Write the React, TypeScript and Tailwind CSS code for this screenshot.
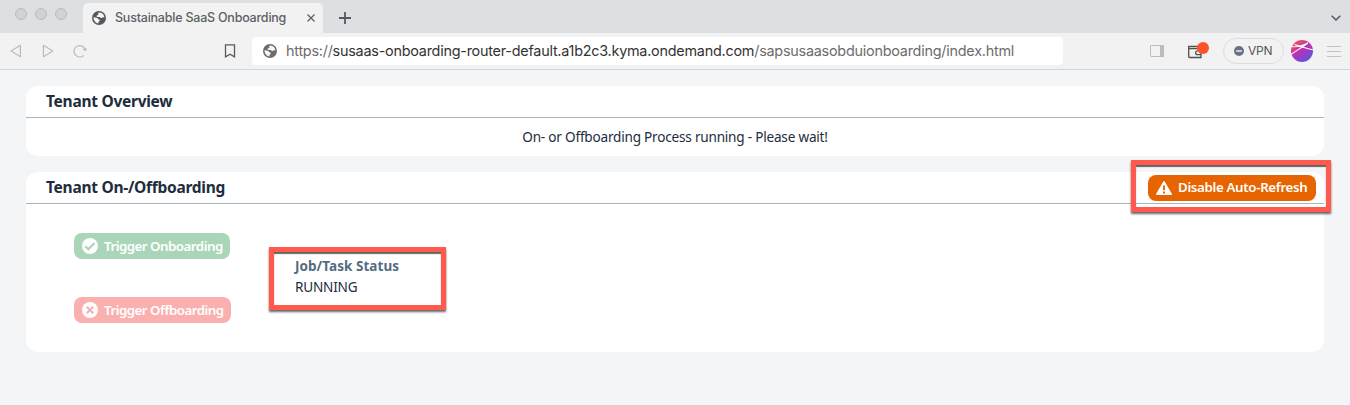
import type { ReactNode } from "react";

function Globe({ className }: { className: string }) {
  return (
    <svg viewBox="0 0 14 14" className={className}>
      <circle cx="7" cy="7" r="7" fill="currentColor" />
      <path d="M7.400 1.500C6.200 1.700 6 2.300 6.300 2.900c.3.600.1 1.100-.5 1.200-.8.200-1.300.500-1.200 1.200.1.600.6.700 1.400.7h1.700c.7 0 .8 1 1.500 1.100.8.100.9-.6 1.600-.8.500-.1 1.100.1 1.600.2A5.600 5.600 0 0 0 7.400 1.500z" fill="#f6f6f6" />
      <path d="M1.500 6.300c1.300.3 2.700.3 3.700.7.900.4.8 1.200 1.500 1.500.6.200 1.200.2 1.200.8 0 .8-1.200.9-1.400 1.700-.1.600.1 1-.3 1.400A5.700 5.700 0 0 1 1.500 6.300z" fill="#f6f6f6" />
    </svg>
  );
}

function TabStrip() {
  return (
    <div className="flex h-[33px] items-end bg-[#dce0e3]">
      <div className="flex h-full w-[83px] items-center gap-2 pb-[5px] pl-[15px]">
        {[0, 1, 2].map((n) => (
          <span key={n} className="size-3 rounded-full border border-[#b9bbbd] bg-[#d0d2d3]" />
        ))}
      </div>
      <div className="flex h-[30px] w-60 items-center rounded-t-[5px] bg-[#f2f2f2] pl-[9px] text-[#5d6165]">
        <Globe className="size-3.5 text-[#55595e]" />
        <span className="ml-[9px] w-[190px] whitespace-nowrap text-[12.5px] font-medium tracking-[-0.22px]">
          Sustainable SaaS Onboarding
        </span>
        <svg viewBox="0 0 8 8" className="ml-[2px] size-2 shrink-0" stroke="currentColor" strokeWidth="1.3">
          <path d="M.5.5l7 7M7.500.500l-7 7" />
        </svg>
      </div>
      <svg viewBox="0 0 12 12" className="mb-[9px] ml-4 size-3" stroke="#55595d" strokeWidth="1.8">
        <path d="M6 0v12M0 6h12" />
      </svg>
      <svg viewBox="0 0 10 6" className="mb-3 ml-auto mr-[9px] h-1.5 w-2.5" fill="none" stroke="#55595d" strokeWidth="1.5">
        <path d="M.7.7L5 5 9.300.700" />
      </svg>
    </div>
  );
}

function Toolbar() {
  return (
    <div className="flex h-[37px] items-center border-b border-[#d3d6d9] bg-[#f2f2f2]">
      <div className="flex w-[252px] items-center text-[#bbb]">
        <svg viewBox="0 0 12 14" className="ml-[10px] h-3.5 w-3" fill="none" stroke="currentColor" strokeWidth="1.200" strokeLinejoin="round">
          <path d="M10.400 1.300v11.400L1 7z" />
        </svg>
        <svg viewBox="0 0 12 14" className="ml-[20px] h-3.5 w-3" fill="none" stroke="currentColor" strokeWidth="1.200" strokeLinejoin="round">
          <path d="M1.400 1.300v11.400L10.800 7z" />
        </svg>
        <svg viewBox="0 0 14 14" className="ml-[19px] size-3.5" fill="none" stroke="currentColor" strokeWidth="1.200">
          <path d="M10.800 11.300A5.700 5.700 0 1 1 12.200 5.700" />
          <path d="M9.800 5.200l1.300 1.500 2.300-.2.300-2.500z" fill="currentColor" stroke="none" />
        </svg>
        <svg viewBox="0 0 12 14" className="ml-[137px] h-3.5 w-3" fill="none" stroke="#5a5a5a" strokeWidth="1.300">
          <path d="M1.500.8h9v12L6 10.200 1.500 12.800z" />
        </svg>
      </div>
      <div className="flex h-7 w-[811px] items-center rounded-[4px] bg-white pl-[11px]">
        <Globe className="size-[14px] text-[#6d6d6d]" />
        <span className="ml-[9px] whitespace-nowrap text-[14.400px] tracking-[-0.237px] text-[#6d6d6d]">
          https://<span className="text-[#333]">susaas-onboarding-router-default.a1b2c3.kyma.ondemand.com</span>
          /sapsusaasobduionboarding/index.html
        </span>
      </div>
      <svg viewBox="0 0 14 12" className="ml-[87px] h-3 w-3.5" fill="none" stroke="#bcbcbc">
        <rect x=".5" y=".5" width="13" height="11" rx=".6" />
        <path d="M10 0h4v12h-4z" fill="#bcbcbc" stroke="none" />
      </svg>
      <div className="relative ml-6 h-[17px] w-[22px]">
        <svg viewBox="0 0 22 17" className="h-[17px] w-[22px]" fill="none" stroke="#4f4f4f" strokeWidth="1.300">
          <path d="M.7 3.500h12.300v11H1.700a1 1 0 0 1-1-1zM.7 5.700h10M13 7.800H9.500a1.900 1.900 0 0 0 0 3.800H13" />
        </svg>
        <span className="absolute -top-px left-[9px] size-3 rounded-full bg-[#ff5226]" />
      </div>
      <div className="ml-[13px] flex h-[26px] w-[61px] items-center rounded-full border border-[#dddddf] pl-[10px]">
        <svg viewBox="0 0 10 10" className="size-2.5">
          <circle cx="5" cy="5" r="5" fill="#6b7088" />
          <path d="M2.200 5h5.600" stroke="#e8e9ee" strokeWidth="1.500" />
        </svg>
        <span className="ml-[4px] text-[12px] tracking-[-0.2px] text-[#55575c]">VPN</span>
      </div>
      <svg viewBox="0 0 22 22" className="ml-[7px] size-[22px]">
        <defs>
          <linearGradient id="avatar" x1=".1" y1="0" x2=".75" y2="1">
            <stop offset="0" stopColor="#fb5347" />
            <stop offset=".5" stopColor="#b832b8" />
            <stop offset="1" stopColor="#5a55df" />
          </linearGradient>
          <clipPath id="avatar-disc"><circle cx="11" cy="11" r="11" /></clipPath>
        </defs>
        <circle cx="11" cy="11" r="11" fill="url(#avatar)" />
        <path clipPath="url(#avatar-disc)" d="M0 14.500C5 11 10 8 17 3M3.500 4.500C9 6.500 15 8.700 22 9.700M0 6.500c5 .7 9 .7 17-3.500" fill="none" stroke="#fff" strokeWidth="1.100" />
      </svg>
      <svg viewBox="0 0 14 12" className="ml-[14px] h-3 w-3.5" stroke="#c2c2c2" strokeWidth="1.100">
        <path d="M0 1.500h14M0 6.500h14M0 11.500h14" />
      </svg>
    </div>
  );
}

function Card({ title, action, children, className }: { title: string; action?: ReactNode; children: ReactNode; className: string }) {
  return (
    <section className={`flex flex-col rounded-xl bg-white ${className}`}>
      <header className="flex h-8 shrink-0 items-center justify-between border-b border-[#a9b4be] pl-5 pr-2">
        <h2 className="whitespace-nowrap pb-0.5 text-[15.500px] font-bold leading-5 tracking-[-0.27px]">{title}</h2>
        {action}
      </header>
      {children}
    </section>
  );
}

const mark = "pointer-events-none absolute border-[5px] border-[#ff5a4d] shadow-[0_2px_2px_#0009,inset_0_2px_1px_#0009]";

export default function App() {
  return (
    <div className="h-[405px] w-[1350px] overflow-hidden bg-[#f4f5f7] font-['Noto_Sans',sans-serif] text-[#1d2d3e]">
      <div className="font-[Inter,sans-serif]">
        <TabStrip />
        <Toolbar />
      </div>
      <main className="flex flex-col gap-4 px-[26px] pt-4">
        <Card title="Tenant Overview" className="h-[70px]">
          <p className="flex flex-1 items-center justify-center text-[13.600px]">
            <span className="whitespace-nowrap tracking-[-0.22px]">On- or Offboarding Process running - Please wait!</span>
          </p>
        </Card>
        <Card
          title="Tenant On-/Offboarding"
          className="h-[180px]"
          action={
            <div className="relative">
              <button className="flex h-[26px] w-[168px] items-center rounded-lg bg-[#e76500] pl-2 text-white">
                <svg viewBox="0 0 16 14" className="h-3.5 w-4 shrink-0">
                  <path d="M8 .8L15.200 13.200H.8z" fill="#fff" stroke="#fff" strokeWidth="1.500" strokeLinejoin="round" />
                  <path d="M8 4.500v4.700M8 10.600v1.800" stroke="#e76500" strokeWidth="1.900" />
                </svg>
                <span className="ml-1.5 whitespace-nowrap pt-px text-[13.300px] font-semibold tracking-[-0.33px]">Disable Auto-Refresh</span>
              </button>
              <span className={`${mark} -left-[17px] -top-[15px] h-[52px] w-[200px]`} />
            </div>
          }
        >
          <div className="flex pl-12 pt-[29px]">
            <div className="flex w-[221px] flex-col items-start gap-[38px]">
              <button className="flex h-[26px] w-[156px] items-center rounded-lg bg-[#abd5b9] pl-2 text-white">
                <svg viewBox="0 0 16 16" className="size-4 shrink-0">
                  <circle cx="8" cy="8" r="8" fill="#fff" />
                  <path d="M3.300 8.300l3 3L12.600 5" fill="none" stroke="#abd5b9" strokeWidth="2" />
                </svg>
                <span className="ml-1.5 whitespace-nowrap pt-px text-[13.300px] font-semibold tracking-[-0.5px]">Trigger Onboarding</span>
              </button>
              <button className="flex h-[26px] w-[157px] items-center rounded-lg bg-[#fbb0b0] pl-2 text-white">
                <svg viewBox="0 0 16 16" className="size-4 shrink-0">
                  <circle cx="8" cy="8" r="8" fill="#fff" />
                  <path d="M4.800 4.800l6.400 6.400M11.200 4.800l-6.400 6.400" stroke="#fbb0b0" strokeWidth="2.200" />
                </svg>
                <span className="ml-1.5 whitespace-nowrap pt-px text-[13.300px] font-semibold tracking-[-0.5px]">Trigger Offboarding</span>
              </button>
            </div>
            <div className="relative pt-[23px] leading-[21px]">
              <div className="whitespace-nowrap text-[13.500px] font-bold tracking-[0.05px] text-[#556b82]">Job/Task Status</div>
              <div className="-mt-px text-[13.600px] tracking-[-0.22px]">RUNNING</div>
              <span className={`${mark} -left-[26px] top-[14px] h-[63px] w-[177px]`} />
            </div>
          </div>
        </Card>
      </main>
    </div>
  );
}
